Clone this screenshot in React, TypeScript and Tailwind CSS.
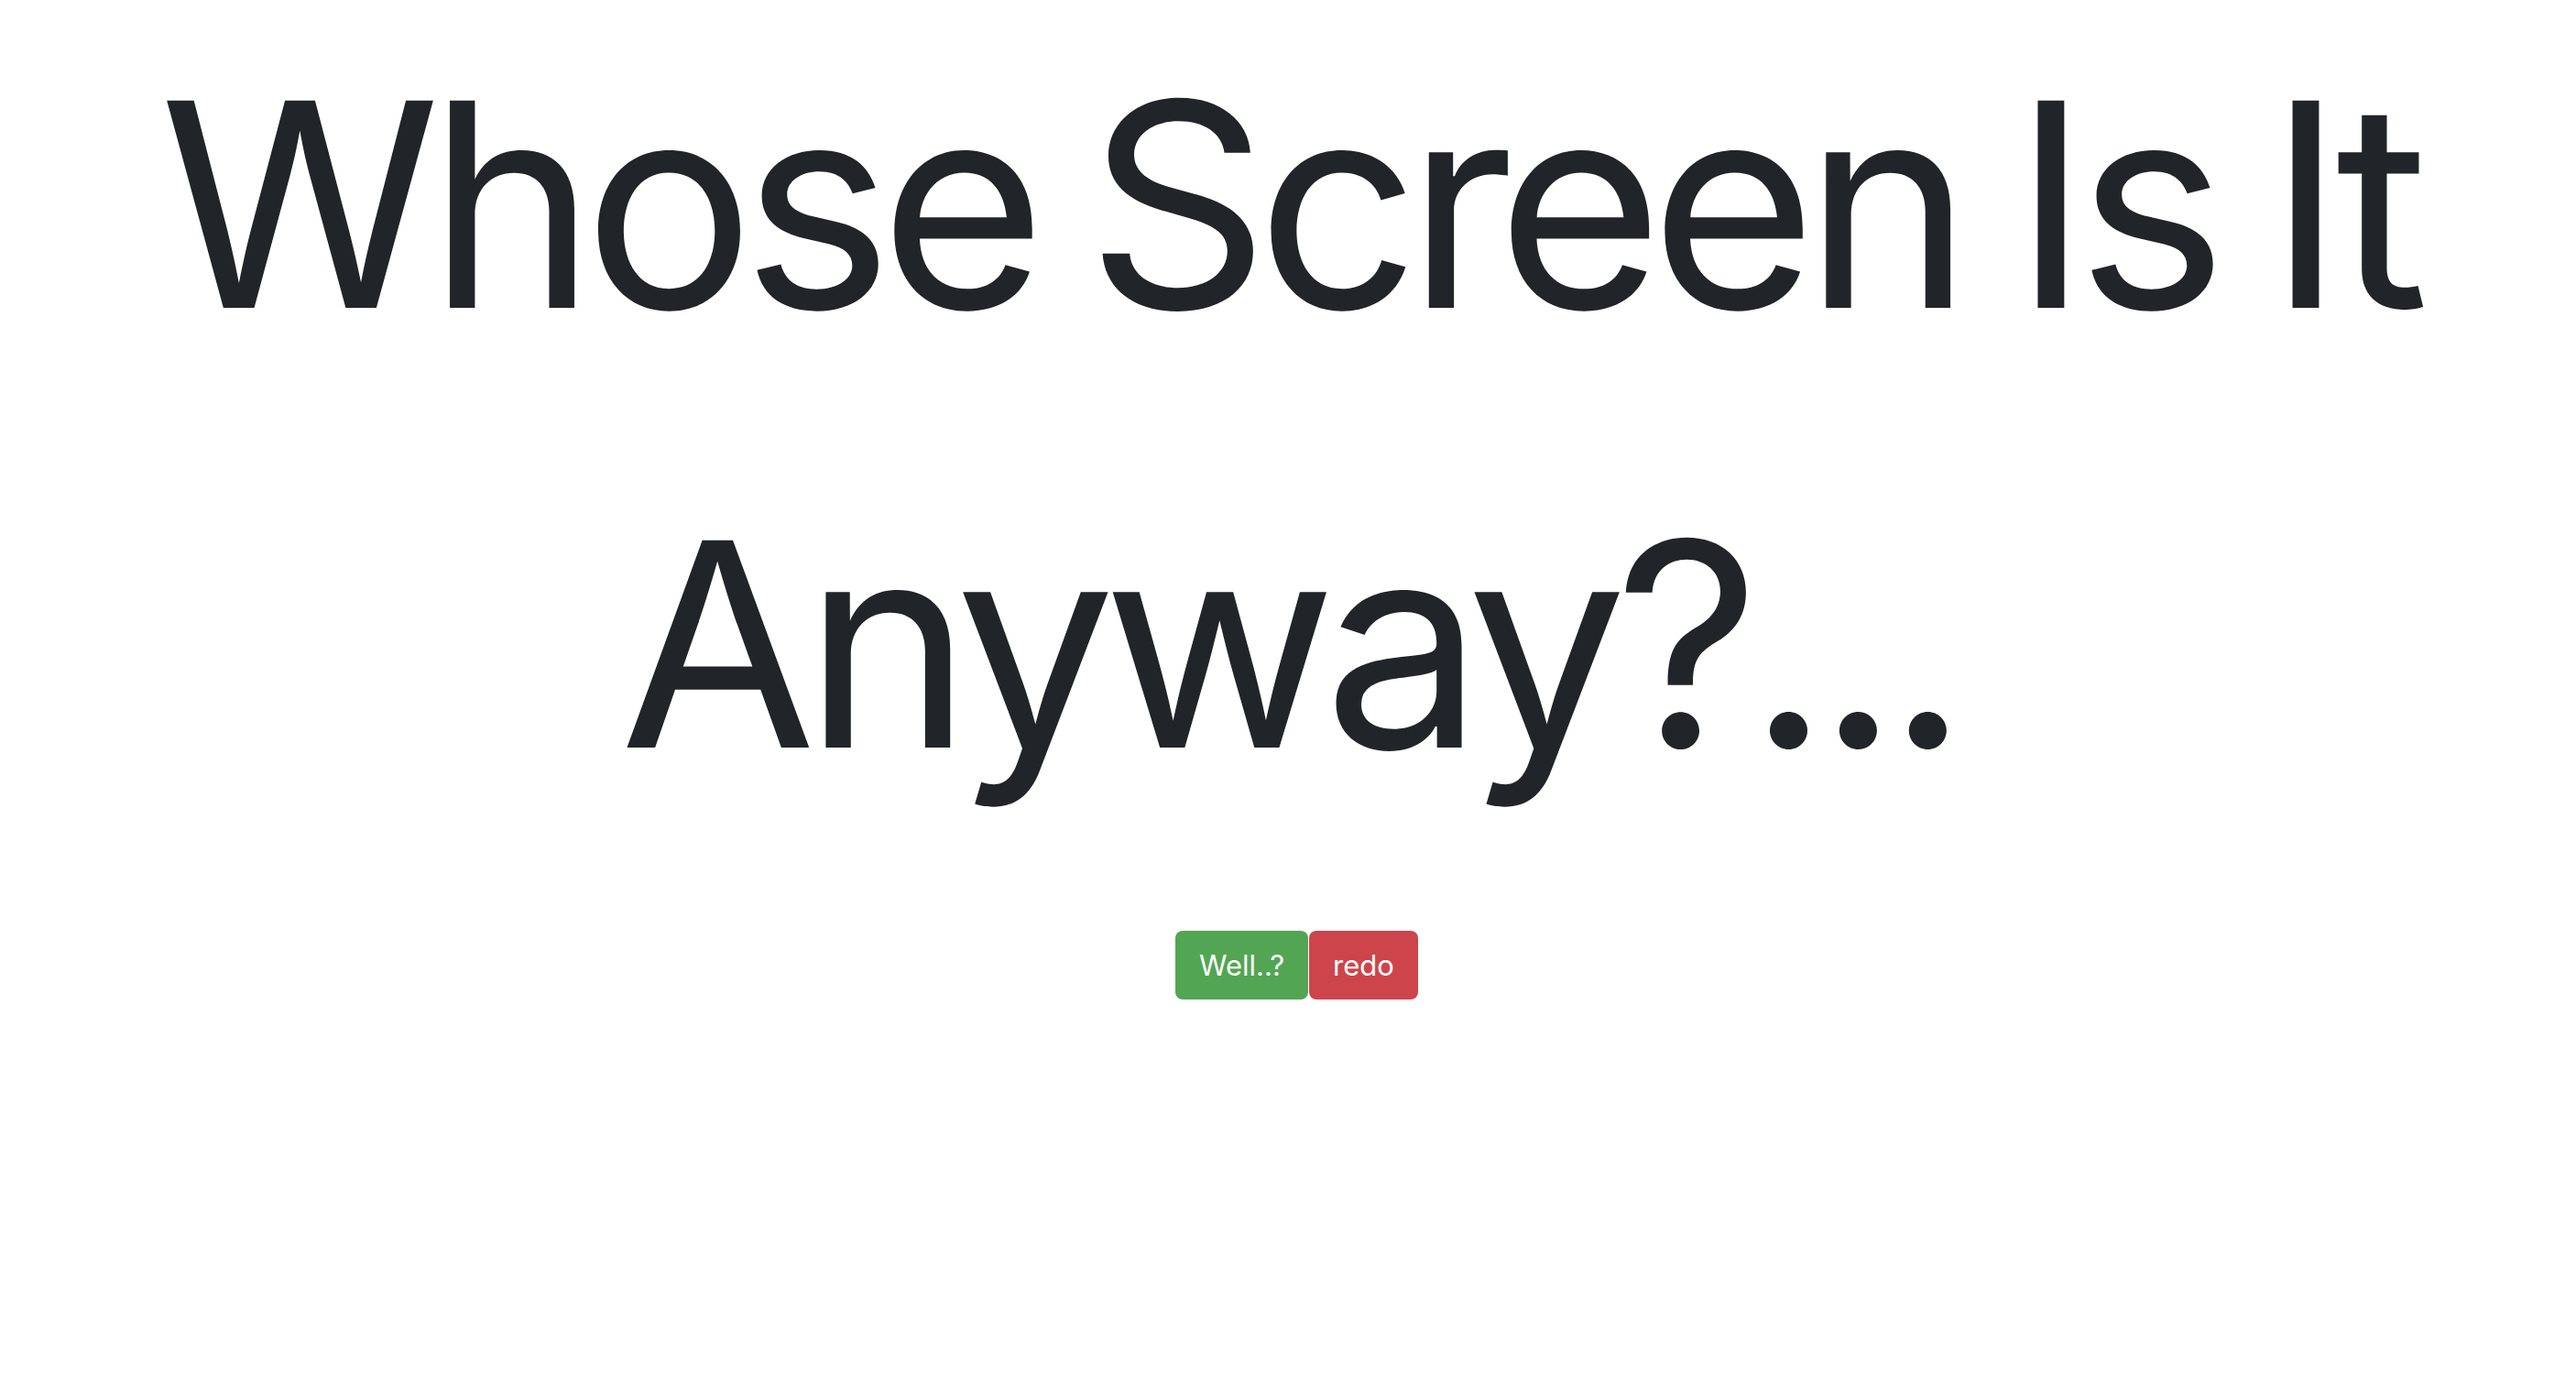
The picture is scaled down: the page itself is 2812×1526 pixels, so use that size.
import React from 'react';

export default function App() {
    return (
        <main className="min-h-screen bg-white text-[#212529]" style={{ fontFamily: 'Inter, "Noto Sans", sans-serif' }}>
            <div className="flex flex-col items-center">
                <h1 className="-mt-[17px] text-center text-[311px] leading-[480px] font-normal tracking-[-0.044em] [word-spacing:-16px]">
                    Whose Screen Is It<br />Anyway?...
                </h1>
                <div className="mt-[73px] flex pl-[19px]">
                    <button
                        type="button"
                        className="h-[75px] px-[26px] rounded-[8px] bg-[#52a552] text-white text-[31px] leading-none"
                    >
                        Well..?
                    </button>
                    <button
                        type="button"
                        className="ml-px h-[75px] px-[26px] rounded-[8px] bg-[#cd444b] text-white text-[31px] leading-none"
                    >
                        redo
                    </button>
                </div>
            </div>
        </main>
    );
}
